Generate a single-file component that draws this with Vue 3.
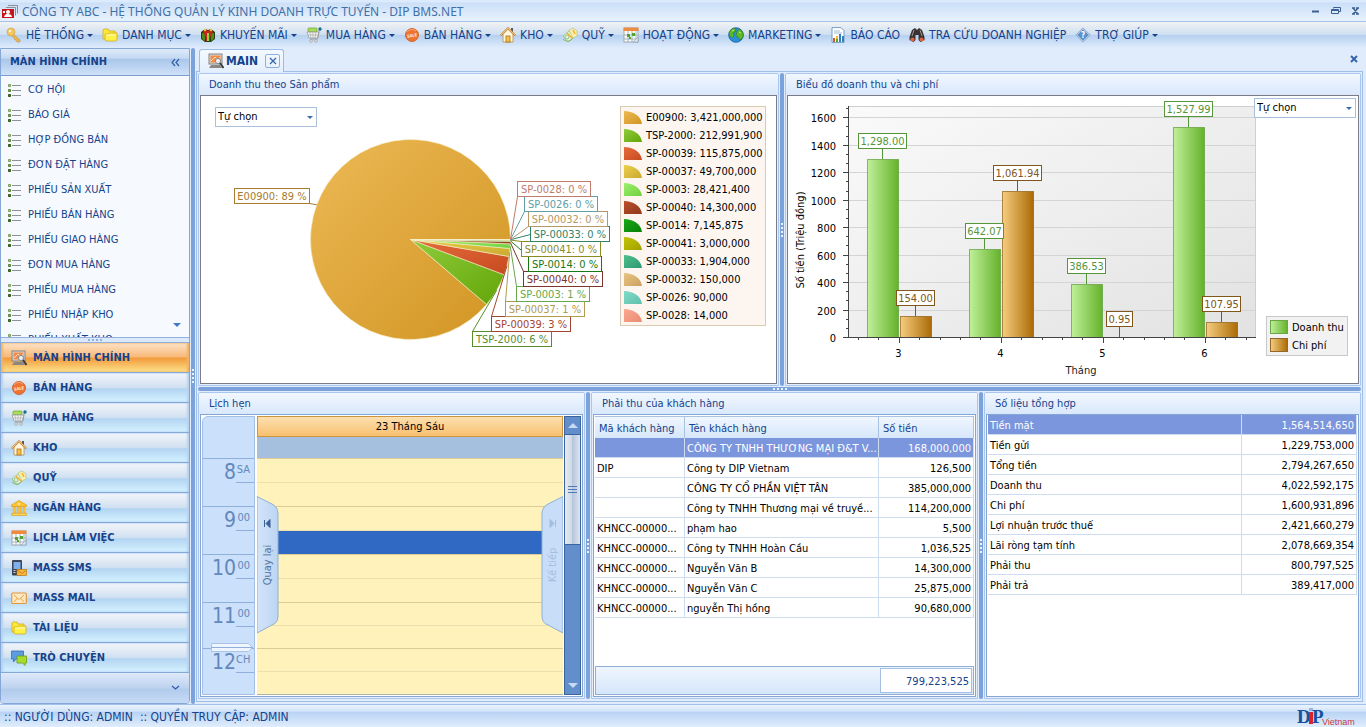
<template>
  <div class="app">
    <svg class="sprite" aria-hidden="true">
      <defs>
        <symbol id="i-app" viewBox="0 0 16 16">
          <path d="M6 1.500h9.500v8M4 3.500h9.500v8" fill="none" stroke="#8a8f98" stroke-width="1" />
          <rect x="0" y="5" width="12" height="9" fill="#c8141a" />
          <circle cx="6" cy="8" r="2" fill="#fff" />
          <path d="M2 13c1-3 2-3 4-3s4 1 4 3z" fill="#fff" />
          <path d="M1 7h2v2H1z" fill="#fff" />
        </symbol>
        <symbol id="i-key" viewBox="0 0 16 16">
          <path d="M6 6l8 7v2h-3l-1-2H9l-1-2-3-3z" fill="#e9b64c" stroke="#c99440" stroke-width=".6" />
          <circle cx="5" cy="5" r="4" fill="#f3c661" stroke="#d6a44c" stroke-width=".7" />
          <circle cx="4" cy="4" r="1.2" fill="#fdf4dc" />
        </symbol>
        <symbol id="i-folder" viewBox="0 0 16 16">
          <path d="M1 3l1-1h4l1 2h6v8H1z" fill="#ffe838" stroke="#d0ad1c" stroke-width=".8" />
          <path d="M3 7h3l1-1h8v7l-1 1H4l-1-1z" fill="#fff04a" stroke="#d0ad1c" stroke-width=".8" />
          <path d="M4 8h10" stroke="#fffbc0" />
        </symbol>
        <symbol id="i-gift" viewBox="0 0 16 16">
          <path d="M1 5l4-3 3 1 3-1 4 3v7l-4 3H5l-4-3z" fill="#273f12" />
          <path d="M2 6h3v8l-3-2zM11 6h3v6l-3 2z" fill="#4c8a1c" />
          <path d="M8 4C5 1 2 4 4 7s2 5 2 7h4c0-2 0-4 2-7s-1-6-4-3z" fill="#c3261b" />
          <path d="M7 6h2v8H7z" fill="#8ed33b" />
          <circle cx="5" cy="3" r="1.3" fill="#e6c33a" />
          <circle cx="11" cy="3" r="1.3" fill="#e6c33a" />
        </symbol>
        <symbol id="i-cart" viewBox="0 0 16 16">
          <rect x="2" y="1" width="9" height="4" rx="1" fill="#a8dc5a" stroke="#6fa32c" stroke-width=".7" />
          <path d="M1 5h12l-1.500 6H3z" fill="#f5f5f5" stroke="#9a9a9a" stroke-width=".8" />
          <path d="M4 5l1 6M7 5v6M10 5l-1 6M2 8h10" stroke="#a9a9a9" stroke-width=".7" />
          <path d="M12 11l1-7 1-2M4 12h8" fill="none" stroke="#9a9a9a" stroke-width=".9" />
          <circle cx="5" cy="14" r="1.300" fill="#fff" stroke="#999" stroke-width=".8" />
          <circle cx="10" cy="14" r="1.300" fill="#fff" stroke="#999" stroke-width=".8" />
          <circle cx="14" cy="2" r="1.700" fill="#176f8e" />
        </symbol>
        <symbol id="i-sale" viewBox="0 0 16 16">
          <circle cx="8" cy="8" r="6.500" fill="#ef7432" stroke="#c9561c" stroke-width=".8" />
          <path d="M3 5a6 6 0 0 1 9-1" fill="none" stroke="#f9a878" />
          <text x="8" y="10" text-anchor="middle" font-size="4" font-weight="700" fill="#ffe8d8" transform="rotate(-8 8 8)">SALE</text>
        </symbol>
        <symbol id="i-house" viewBox="0 0 16 16">
          <path d="M11 1h2v5h-2z" fill="#5a5a5a" />
          <path d="M3 7l5-5 5 5v8H3z" fill="#fff6e0" stroke="#b58a4a" stroke-width=".8" />
          <path d="M.7 8.500L8 1.300l7.300 7.200" fill="none" stroke="#c98a3a" stroke-width="2" />
          <path d="M1 8l7-6.700L15 8" fill="none" stroke="#f6d9a0" stroke-width=".8" />
          <rect x="6" y="9" width="4" height="6" fill="#f8c23c" stroke="#a8701c" stroke-width=".8" />
        </symbol>
        <symbol id="i-money" viewBox="0 0 16 16">
          <path d="M1 9l6-5 5 6-6 5z" fill="#e3f3dc" stroke="#8fc07c" stroke-width=".8" />
          <path d="M1 12c3 3 7 3 10-1" fill="none" stroke="#7fb56a" />
          <circle cx="5" cy="10" r="2" fill="none" stroke="#7fb56a" stroke-width=".8" />
          <path d="M7 3l4-2 4 3v5l-4 2z" fill="#fbf0b0" stroke="#b9c98a" stroke-width=".8" />
          <path d="M5 6l5 5M11 3l2 4" stroke="#f2b32c" stroke-width="1.600" />
        </symbol>
        <symbol id="i-calendar" viewBox="0 0 16 16">
          <rect x="1" y="1" width="14" height="14" fill="#fbfbf6" stroke="#8f9aa6" stroke-width=".8" />
          <path d="M.6.600h14.800v3.400H.6z" fill="#f08a3c" />
          <path d="M1 8h14M1 12h14M5 4v11M9 4v11M13 4v11" stroke="#8fa6b4" stroke-width=".8" />
          <path d="M4 7h3v3H4zM9 6h3v3H9zM6 10h2v2H6z" fill="#4fa52f" />
          <path d="M15 10v5h-5z" fill="#d8e8f4" stroke="#8f9aa6" stroke-width=".6" />
        </symbol>
        <symbol id="i-globe" viewBox="0 0 16 16">
          <circle cx="8" cy="8" r="7.300" fill="#2a8fdc" stroke="#175b98" stroke-width=".8" />
          <path d="M2 4c2-3 5-3 6-2l-1 3-2 1 1 3-2 2-2-2-1-3zM9 4l3-2 3 4v4l-3 3-2-3-2-1z" fill="#5dbb2b" stroke="#2f7d14" stroke-width=".6" />
          <path d="M4 4l2-1M11 5l2 1" stroke="#c7ef6a" />
        </symbol>
        <symbol id="i-report" viewBox="0 0 16 16">
          <path d="M2 .600h9l3 3v11.800H2z" fill="#fff" stroke="#6a93bd" stroke-width=".9" />
          <path d="M4 4h6M4 6h8" stroke="#9cbbd8" />
          <path d="M3 11h2v4H3z" fill="#e5502c" />
          <path d="M6 9h2v6H6z" fill="#f1b72d" />
          <path d="M9 7h2v8H9zM12 9h2v6h-2z" fill="#2f84bd" />
          <path d="M6 12h2v3H6z" fill="#54a836" />
        </symbol>
        <symbol id="i-binoculars" viewBox="0 0 16 16">
          <path d="M3 3l3-2 2 2 2-2 3 2 2.500 7v3l-4 2-2-2V8h-3v5l-2 2-4-2v-3z" fill="#3a3232" />
          <path d="M5 3l-2 6M11 3l2 6" stroke="#9a9494" />
          <circle cx="3.500" cy="12.500" r="2" fill="#e2603a" />
          <circle cx="12.500" cy="12.500" r="2" fill="#e2603a" />
        </symbol>
        <symbol id="i-help" viewBox="0 0 16 16">
          <path d="M8 .8L15.200 8 8 15.200.8 8z" fill="#f4f8fc" stroke="#86a9cf" />
          <path d="M8 2l6 6-6 6-6-6z" fill="#5f92cb" />
          <text x="8" y="11" text-anchor="middle" font-size="8" font-weight="700" fill="#fff">?</text>
        </symbol>
        <symbol id="i-monitor" viewBox="0 0 16 16">
          <rect x="1" y="1" width="13" height="10" fill="#d9d9d6" stroke="#85837f" />
          <rect x="2.500" y="2.500" width="10" height="7" fill="#f28c45" />
          <path d="M3 8l4-4 3 3 2-3" stroke="#fcdcc0" fill="none" />
          <path d="M3 12h9l2 3H1z" fill="#8b8884" />
          <circle cx="10" cy="8" r="2.600" fill="#e8eef2" stroke="#8b8b8b" />
          <path d="M12 10l3.500 5" stroke="#3b3b3b" stroke-width="2" />
        </symbol>
        <symbol id="i-bank" viewBox="0 0 16 16">
          <path d="M8 .5L15.500 5v1.500H.5V5z" fill="#ffc42e" stroke="#dd9a17" stroke-width=".7" />
          <path d="M2 7h2.500v6H2zM6 7h1.600v6H6zM8.800 7h1.600v6H8.800zM12 7h2v6h-2z" fill="#fdc63b" stroke="#e0a020" stroke-width=".4" />
          <path d="M.5 13.300h15v2.200H.5z" fill="#ffd24f" stroke="#dd9a17" stroke-width=".6" />
          <circle cx="8" cy="4" r="1" fill="#fff3c5" />
        </symbol>
        <symbol id="i-phone" viewBox="0 0 16 16">
          <rect x="1" y="0" width="10" height="15.500" rx="1" fill="#3b4656" />
          <rect x="2.500" y="2" width="7" height="7" fill="#7fb0ee" />
          <path d="M2.500 10.500h2M2.500 12.500h2" stroke="#c7d0dc" />
          <rect x="6" y="9.500" width="9.500" height="6" fill="#f7b73a" stroke="#c27a16" stroke-width=".7" />
          <path d="M6 10l5 3.500L15.500 10" fill="none" stroke="#c27a16" stroke-width=".8" />
        </symbol>
        <symbol id="i-mail" viewBox="0 0 16 16">
          <rect x=".7" y="3" width="14.600" height="10.500" rx="1" fill="#fde9c4" stroke="#e5983a" stroke-width="1.200" />
          <path d="M3 5l5 4.500L13 5M3 12l3.500-4M13 12L9.500 8" fill="none" stroke="#e9a546" />
        </symbol>
        <symbol id="i-chat" viewBox="0 0 16 16">
          <path d="M.5 1h12v8H5l-2.500 3V9h-2z" fill="#5b9bdf" stroke="#3a6fa8" stroke-width=".8" />
          <path d="M6 6h9.500v7H14v2.500L11.500 13H6z" fill="#a6dc2c" stroke="#6b9d14" stroke-width=".8" />
        </symbol>
        <symbol id="i-list" viewBox="0 0 14 14">
          <path d="M4 2.500h9M4 7.500h9M4 12.500h9" stroke="#8e9298" />
          <path d="M.5 1.500h2v2h-2z" fill="#a9c98a" stroke="#7fa05c" />
          <path d="M.5 6.500h2v2h-2z" fill="#86ab62" stroke="#5a8238" />
          <path d="M.5 11.500h2v2h-2z" fill="#4f7a2a" stroke="#2f5a12" />
        </symbol>
      </defs>
    </svg>

    <header class="title">
      <svg class="icon"><use href="#i-app" /></svg>
      <h1 class="title__text">CÔNG TY ABC - HỆ THỐNG QUẢN LÝ KINH DOANH TRỰC TUYẾN - DIP BMS.NET</h1>
      <button class="title__btn" aria-label="Minimize">
        <svg width="10" height="10"><path d="M1 5.500h7" stroke="#3c6090" stroke-width="2" /></svg>
      </button>
      <button class="title__btn" aria-label="Restore">
        <svg width="10" height="10"><path d="M2.500 2.500v-1h7v4h-2M.5 3.500h7v4h-7zM.5 4.500h7" fill="none" stroke="#3c6090" /></svg>
      </button>
      <button class="title__btn" aria-label="Close">
        <svg width="10" height="10"><path d="M2 2l5 6M7 2L2 8M1 2h3M5 2h3M1 8h3M5 8h3" stroke="#3c6090" stroke-width="1.300" /></svg>
      </button>
    </header>

    <nav class="menu">
      <button v-for="m in menu" :key="m.text" class="menu__item">
        <svg class="icon"><use :href="'#i-' + m.icon" /></svg>
        <span>{{ m.text }}</span>
        <i v-if="!m.plain" class="caret"></i>
      </button>
    </nav>

    <div class="body">
      <aside class="side">
        <div class="side__head">
          <span>MÀN HÌNH CHÍNH</span>
          <button class="side__collapse" aria-label="Collapse">
            <svg width="9" height="9"><path d="M4 1L1 4.500 4 8M8 1L5 4.500 8 8" fill="none" stroke="#2f5fa8" stroke-width="1.200" /></svg>
          </button>
        </div>
        <div class="side__list">
          <a v-for="l in links" :key="l" href="#" class="side__link">
            <svg class="side__bullet"><use href="#i-list" /></svg>{{ l }}
          </a>
          <i class="side__more"></i>
        </div>
        <div class="side__grip"></div>
        <button
          v-for="n in groups"
          :key="n.text"
          class="side__nav"
          :class="{ 'side__nav--active': n.active }"
        >
          <svg class="icon"><use :href="'#i-' + n.icon" /></svg>{{ n.text }}
        </button>
        <div class="side__foot">
          <button class="side__collapse" aria-label="More">
            <svg width="9" height="6"><path d="M1 1l3.500 3L8 1" fill="none" stroke="#2f5fa8" stroke-width="1.300" /></svg>
          </button>
        </div>
      </aside>

      <div class="split split--v"></div>

      <main class="main">
        <div class="tabs">
          <div class="tab">
            <svg class="icon"><use href="#i-monitor" /></svg>
            <span>MAIN</span>
            <button class="tab__close" aria-label="Close tab">
              <svg width="8" height="8"><path d="M1 1l6 6M7 1L1 7" stroke="#3565ad" stroke-width="1.300" /></svg>
            </button>
          </div>
          <button class="tabs__close" aria-label="Close">
            <svg width="8" height="8"><path d="M1 1l6 6M7 1L1 7" stroke="#3565ad" stroke-width="2" /></svg>
          </button>
        </div>

        <div class="page">
          <div class="row row--top">
            <section class="panel">
              <h2 class="panel__head">Doanh thu theo Sản phẩm</h2>
              <div class="panel__content panel__content--chart">
                <svg class="chart" viewBox="0 0 575 287" role="img" aria-label="Doanh thu theo Sản phẩm">
                  <defs>
                    <linearGradient v-for="p in slices" :id="'g-' + p.code" :key="p.code" x1="0" y1="0" x2="1" y2="1">
                      <stop offset="0" :stop-color="p.from" />
                      <stop offset="1" :stop-color="p.to" />
                    </linearGradient>
                  </defs>
                  <path v-for="p in slices" :key="p.code" :d="p.path" :fill="`url(#g-${p.code})`" stroke="#f6efc8" stroke-width=".6" />
                  <g v-for="p in slices" :key="p.code">
                    <path :d="p.leader" fill="none" :stroke="p.line" />
                    <rect :x="p.lx + 0.5" :y="p.ly + 0.5" :width="p.lw" height="15" fill="#fff" :stroke="p.line" />
                    <text :x="p.lx + 0.5 + p.lw / 2" :y="p.ly + 12" text-anchor="middle" :fill="p.line">{{ p.code }}: {{ p.pct }} %</text>
                  </g>
                  <rect x="419.500" y="10.500" width="145" height="219" fill="#fdf6f0" stroke="#d9cbb0" />
                  <g v-for="(p, i) in slices" :key="p.code">
                    <path :d="`M423 ${15 + i * 18}c9 0 17 5 18 13h-18z`" :fill="`url(#g-${p.code})`" />
                    <text x="445" :y="25 + i * 18" fill="#000">{{ p.code }}: {{ fmt(p.value) }}</text>
                  </g>
                </svg>
                <label class="pick pick--left">
                  <select aria-label="Kiểu biểu đồ"><option>Tự chọn</option></select>
                </label>
              </div>
            </section>
            <div class="split split--v"></div>
            <section class="panel">
              <h2 class="panel__head">Biểu đồ doanh thu và chi phí</h2>
              <div class="panel__content panel__content--chart">
                <svg class="chart" viewBox="0 0 570 287" role="img" aria-label="Biểu đồ doanh thu và chi phí">
                  <defs>
                    <linearGradient id="plot" x1="0" y1="0" x2="1" y2="1">
                      <stop offset="0" stop-color="#fafafa" />
                      <stop offset="1" stop-color="#e2e2e2" />
                    </linearGradient>
                    <linearGradient id="green">
                      <stop offset="0" stop-color="#c0f09a" />
                      <stop offset="1" stop-color="#65b22a" />
                    </linearGradient>
                    <linearGradient id="brown">
                      <stop offset="0" stop-color="#f5cd7e" />
                      <stop offset="1" stop-color="#ab6a06" />
                    </linearGradient>
                  </defs>
                  <rect x="60.500" y="10.500" width="407" height="231" fill="url(#plot)" stroke="#cfcfcf" />
                  <g v-for="t in yTicks" :key="t.v">
                    <path v-if="t.major" :d="`M61 ${t.y}H467`" stroke="#d4d4d4" />
                    <path :d="`M${t.major ? 55 : 58} ${t.y}h${t.major ? 6 : 3}`" stroke="#444" />
                    <text v-if="t.major" x="48" :y="t.y + 4" text-anchor="end" fill="#000">{{ t.v }}</text>
                  </g>
                  <path v-for="n in 20" :key="n" :d="`M${Math.round(70 + (n - 1) * 20.4) + 0.5} 241v${n % 5 === 3 ? 6 : 3}`" stroke="#444" />
                  <rect
                    v-for="(b, i) in bars"
                    :key="i"
                    :x="b.x + 0.5"
                    :y="b.top + 0.5"
                    :width="b.w"
                    :height="241 - b.top"
                    :fill="`url(#${b.kind})`"
                    :stroke="b.kind === 'green' ? '#5d9c3a' : '#8d5c12'"
                    stroke-opacity=".7"
                  />
                  <path d="M60.500 10v232M60 241.500h408" stroke="#444" />
                  <g v-for="(b, i) in bars" :key="'l' + i" :stroke="b.color">
                    <path :d="`M${b.cx + 0.5} ${b.top}v-10`" />
                    <rect :x="b.cx - b.lw / 2 + 0.5" :y="b.top - 25.5" :width="b.lw" height="15" fill="#fff" />
                    <text :x="b.cx + 0.5" :y="b.top - 14" text-anchor="middle" :fill="b.color" stroke="none">{{ b.label }}</text>
                  </g>
                  <text v-for="(m, i) in [3, 4, 5, 6]" :key="m" :x="110.5 + i * 102" y="261" text-anchor="middle" fill="#000">{{ m }}</text>
                  <text x="293" y="278" text-anchor="middle" fill="#222">Tháng</text>
                  <text transform="translate(16 144) rotate(-90)" text-anchor="middle" fill="#000">Số tiền (Triệu đồng)</text>
                  <rect x="478.500" y="220.500" width="81" height="39" fill="#f2f2f2" stroke="#c8c8c8" />
                  <rect x="482.500" y="224.500" width="17" height="13" fill="url(#green)" stroke="#6aa548" />
                  <rect x="482.500" y="242.500" width="17" height="13" fill="url(#brown)" stroke="#94672a" />
                  <text x="504" y="235" fill="#000">Doanh thu</text>
                  <text x="504" y="253" fill="#000">Chi phí</text>
                </svg>
                <label class="pick pick--right">
                  <select aria-label="Kiểu biểu đồ"><option>Tự chọn</option></select>
                </label>
              </div>
            </section>
          </div>

          <div class="split split--h"></div>

          <div class="row row--bottom">
            <section class="panel">
              <h2 class="panel__head">Lịch hẹn</h2>
              <div class="panel__content cal">
                <div class="ruler">
                  <div class="ruler__top"></div>
                  <div class="hours">
                    <div v-for="h in hours" :key="h.h" class="ruler__hour">
                      <svg v-if="h.now" class="ruler__now" width="43" height="9">
                        <path d="M.5.500h37l4 4-4 4H.5z" fill="#eef5fe" stroke="#a9c4e6" />
                        <path d="M0 4.500h42" stroke="#8fb0da" />
                      </svg>
                      <span class="ruler__num">{{ h.h }}</span>
                      <span class="ruler__sup">{{ h.sup }}</span>
                    </div>
                  </div>
                </div>
                <div class="day">
                  <div class="day__head">23 Tháng Sáu</div>
                  <div class="day__all"></div>
                  <div class="hours">
                    <div v-for="h in hours" :key="h.h" class="day__hour">
                      <div class="day__half"></div>
                      <div class="day__half" :class="{ 'day__half--sel': h.h === 9 }"></div>
                    </div>
                  </div>
                  <button class="day__nav day__nav--prev">
                    <svg width="22" height="138">
                      <defs>
                        <linearGradient id="nav"><stop offset="0" stop-color="#d3e4f9" /><stop offset="1" stop-color="#bcd5f3" /></linearGradient>
                      </defs>
                      <path d="M0 .5L15 8q6 3 6 10v102q0 7-6 9L0 137z" fill="url(#nav)" stroke="#8fafd6" />
                      <path d="M7.500 24v7M13 23.500v8L9 27.500z" fill="#3d5f94" stroke="#3d5f94" />
                      <text transform="translate(14 69) rotate(-90)" text-anchor="middle" fill="#5474a3">Quay lại</text>
                    </svg>
                  </button>
                  <button class="day__nav day__nav--next" disabled>
                    <svg width="22" height="138">
                      <path d="M22 .5L7 8q-6 3-6 10v102q0 7 6 9l15 8z" fill="#c8ddf7" stroke="#8fafd6" />
                      <path d="M14.500 24v7M9 23.500v8l4-4z" fill="#a3bddd" stroke="#a3bddd" />
                      <text transform="translate(15 69) rotate(-90)" text-anchor="middle" fill="#a3bddd">Kế tiếp</text>
                    </svg>
                  </button>
                </div>
                <div class="bar">
                  <button class="bar__btn" aria-label="Up"><i class="bar__up"></i></button>
                  <div class="bar__thumb"></div>
                  <div class="bar__track"></div>
                  <button class="bar__btn" aria-label="Down"><i class="bar__down"></i></button>
                </div>
              </div>
            </section>
            <div class="split split--v"></div>
            <section class="panel">
              <h2 class="panel__head">Phải thu của khách hàng</h2>
              <div class="panel__content debts">
                <table class="grid">
                  <colgroup><col class="grid__code" /><col /><col class="grid__money" /></colgroup>
                  <thead>
                    <tr><th>Mã khách hàng</th><th>Tên khách hàng</th><th>Số tiền</th></tr>
                  </thead>
                  <tbody>
                    <tr v-for="(d, i) in debts" :key="i" :class="{ sel: i === 0 }">
                      <td>{{ d[0] }}</td>
                      <td>{{ d[1] }}</td>
                      <td class="num">{{ fmt(d[2]) }}</td>
                    </tr>
                  </tbody>
                </table>
                <div class="debts__foot"><output class="debts__total">{{ fmt(debtTotal) }}</output></div>
              </div>
            </section>
            <div class="split split--v"></div>
            <section class="panel">
              <h2 class="panel__head">Số liệu tổng hợp</h2>
              <div class="panel__content summary">
                <table class="grid">
                  <colgroup><col /><col class="grid__sum" /></colgroup>
                  <tbody>
                    <tr v-for="(s, i) in summary" :key="s[0]" :class="{ sel: i === 0 }">
                      <td>{{ s[0] }}</td>
                      <td class="num">{{ fmt(s[1]) }}</td>
                    </tr>
                  </tbody>
                </table>
              </div>
            </section>
          </div>
        </div>
      </main>
    </div>

    <footer class="status">
      <span>:: NGƯỜI DÙNG: ADMIN</span>
      <span>:: QUYỀN TRUY CẬP: ADMIN</span>
      <svg class="status__logo" width="60" height="20">
        <text x="0" y="16" class="logo-big" fill="#17509f">D</text>
        <path d="M12 1h4v3h-4z" fill="#8fb6e6" />
        <path d="M12 5h4v12h-4z" fill="#d9232b" />
        <text x="15" y="16" class="logo-big" fill="#17509f">P</text>
        <text x="25" y="18" class="logo-small" fill="#c53a42">Vietnam</text>
      </svg>
    </footer>
  </div>
</template>

<script setup>
const menu = [
  { icon: 'key', text: 'HỆ THỐNG' },
  { icon: 'folder', text: 'DANH MỤC' },
  { icon: 'gift', text: 'KHUYẾN MÃI' },
  { icon: 'cart', text: 'MUA HÀNG' },
  { icon: 'sale', text: 'BÁN HÀNG' },
  { icon: 'house', text: 'KHO' },
  { icon: 'money', text: 'QUỸ' },
  { icon: 'calendar', text: 'HOẠT ĐỘNG' },
  { icon: 'globe', text: 'MARKETING' },
  { icon: 'report', text: 'BÁO CÁO', plain: true },
  { icon: 'binoculars', text: 'TRA CỨU DOANH NGHIỆP', plain: true },
  { icon: 'help', text: 'TRỢ GIÚP' },
]

const links = [
  'CƠ HỘI', 'BÁO GIÁ', 'HỢP ĐỒNG BÁN', 'ĐƠN ĐẶT HÀNG', 'PHIẾU SẢN XUẤT', 'PHIẾU BÁN HÀNG',
  'PHIẾU GIAO HÀNG', 'ĐƠN MUA HÀNG', 'PHIẾU MUA HÀNG', 'PHIẾU NHẬP KHO', 'PHIẾU XUẤT KHO',
]

const groups = [
  { icon: 'monitor', text: 'MÀN HÌNH CHÍNH', active: true },
  { icon: 'sale', text: 'BÁN HÀNG' },
  { icon: 'cart', text: 'MUA HÀNG' },
  { icon: 'house', text: 'KHO' },
  { icon: 'money', text: 'QUỸ' },
  { icon: 'bank', text: 'NGÂN HÀNG' },
  { icon: 'calendar', text: 'LỊCH LÀM VIỆC' },
  { icon: 'phone', text: 'MASS SMS' },
  { icon: 'mail', text: 'MASS MAIL' },
  { icon: 'folder', text: 'TÀI LIỆU' },
  { icon: 'chat', text: 'TRÒ CHUYỆN' },
]

// lx, ly, lw: label box; ax, ay: where the leader leaves the box
const products = [
  { code: 'E00900', value: 3421000000, from: '#edb955', to: '#d09422', line: '#a67c30', lx: 33, ly: 92, lw: 75, ax: 75, ay: 15 },
  { code: 'TSP-2000', value: 212991900, from: '#8fcc3c', to: '#62a508', line: '#5a8c2c', lx: 271, ly: 235, lw: 79, ay: 0 },
  { code: 'SP-00039', value: 115875000, from: '#e66c3c', to: '#c74a20', line: '#a34430', lx: 290, ly: 220, lw: 79, ay: 0 },
  { code: 'SP-00037', value: 49700000, from: '#eccf4c', to: '#c9aa30', line: '#b09c4c', lx: 304, ly: 205, lw: 79, ay: 0 },
  { code: 'SP-0003', value: 28421400, from: '#9cf06c', to: '#70d040', line: '#68a84c', lx: 315, ly: 190, lw: 73, ay: 0 },
  { code: 'SP-00040', value: 14300000, from: '#bc4e2c', to: '#8e3a1c', line: '#7c342c', lx: 322, ly: 175, lw: 79, ay: 0 },
  { code: 'SP-0014', value: 7145875, from: '#18a818', to: '#088008', line: '#187818', lx: 327, ly: 160, lw: 73, ay: 0 },
  { code: 'SP-00041', value: 3000000, from: '#c4c404', to: '#a0a000', line: '#8c8c24', lx: 320, ly: 145, lw: 79, ay: 0 },
  { code: 'SP-00033', value: 1904000, from: '#4cc08c', to: '#309870', line: '#308468', lx: 329, ly: 130, lw: 79, ay: 8 },
  { code: 'SP-00032', value: 150000, from: '#e8c484', to: '#cca060', line: '#b49868', lx: 327, ly: 115, lw: 79, ay: 15 },
  { code: 'SP-0026', value: 90000, from: '#80dcc8', to: '#60c0ac', line: '#60a0a8', lx: 323, ly: 100, lw: 73, ay: 15 },
  { code: 'SP-0028', value: 14000, from: '#fca890', to: '#e88c74', line: '#c07c6c', lx: 316, ly: 85, lw: 73, ay: 15 },
]

const CX = 209.5
const CY = 143.5
const R = 100
const total = products.reduce((s, p) => s + p.value, 0)

function point(a, r = R) {
  return `${(CX + r * Math.cos(a)).toFixed(2)} ${(CY + r * Math.sin(a)).toFixed(2)}`
}

// slices run clockwise from east, smallest first
let angle = 0
const slices = [...products]
  .reverse()
  .map((p) => {
    const a0 = angle
    angle += (p.value / total) * Math.PI * 2
    const big = angle - a0 > Math.PI ? 1 : 0
    const mid = p.code === 'E00900' ? Math.PI * 1.113 : (a0 + angle) / 2
    return {
      ...p,
      pct: Math.round((p.value / total) * 100),
      path: `M${CX} ${CY}L${point(a0)}A${R} ${R} 0 ${big} 1 ${point(angle)}z`,
      leader: `M${point(mid)}L${p.lx + (p.ax || 0) + 0.5} ${p.ly + p.ay + 0.5}`,
    }
  })
  .reverse()

const yTicks = Array.from({ length: 26 }, (_, i) => {
  const v = (i * 200) / 3
  return { v: Math.round(v), y: Math.round(241 - v * 0.1373) + 0.5, major: i % 3 === 0 }
}).filter((t) => t.y > 10)

const bars = [
  [1298, 154],
  [642.07, 1061.94],
  [386.53, 0.95],
  [1527.99, 107.95],
].flatMap((pair, i) =>
  pair.map((v, k) => {
    const label = v.toLocaleString('en-US', { minimumFractionDigits: 2 })
    const x = 79 + i * 102 + k * 33
    return {
      x,
      w: 31,
      cx: x + 15,
      top: Math.round(241 - v * 0.1373),
      kind: k ? 'brown' : 'green',
      color: k ? '#80561a' : '#56963a',
      label,
      lw: { 4: 26, 6: 38, 8: 48 }[label.length],
    }
  }),
)

const hours = [
  { h: 8, sup: 'SA' },
  { h: 9, sup: '00' },
  { h: 10, sup: '00' },
  { h: 11, sup: '00' },
  { h: 12, sup: 'CH', now: true },
]

const debts = [
  ['', 'CÔNG TY TNHH THƯƠNG MẠI Đ&T V...', 168000000],
  ['DIP', 'Công ty DIP Vietnam', 126500],
  ['', 'CÔNG TY CỔ PHẦN VIỆT TÂN', 385000000],
  ['', 'Công ty TNHH Thương mại về truyề...', 114200000],
  ['KHNCC-00000...', 'phạm hao', 5500],
  ['KHNCC-00000...', 'Công ty TNHH Hoàn Cầu', 1036525],
  ['KHNCC-00000...', 'Nguyễn Văn B', 14300000],
  ['KHNCC-00000...', 'Nguyễn Văn C', 25875000],
  ['KHNCC-00000...', 'nguyễn Thị hồng', 90680000],
]
const debtTotal = 799223525

const summary = [
  ['Tiền mặt', 1564514650],
  ['Tiền gửi', 1229753000],
  ['Tổng tiền', 2794267650],
  ['Doanh thu', 4022592175],
  ['Chi phí', 1600931896],
  ['Lợi nhuận trước thuế', 2421660279],
  ['Lãi ròng tạm tính', 2078669354],
  ['Phải thu', 800797525],
  ['Phải trả', 389417000],
]

function fmt(n) {
  return n.toLocaleString('en-US')
}
</script>

<style>
body {
  margin: 0;
}
</style>

<style scoped>
.app {
  display: flex;
  flex-direction: column;
  height: 100vh;
  min-height: 640px;
  overflow: hidden;
  background: #e0ecfc;
  color: #15428b;
  font: 11px/14px 'DejaVu Sans Condensed', 'Noto Sans', sans-serif;
}

.app *,
.app *::before,
.app *::after {
  box-sizing: border-box;
}

button {
  padding: 0;
  border: 0;
  background: none;
  color: inherit;
  font: inherit;
}

h1,
h2 {
  margin: 0;
  font: inherit;
}

.sprite {
  position: absolute;
  width: 0;
  height: 0;
}

.icon {
  width: 16px;
  height: 16px;
  flex-shrink: 0;
}

.caret {
  border: 3px solid transparent;
  border-top-color: #15428b;
  border-bottom: 0;
}

/* ── Title and menu ── */
.title {
  display: flex;
  align-items: center;
  height: 22px;
  padding: 2px 0 0 2px;
  border-bottom: 1px solid #a3c2ea;
  background: linear-gradient(#dceafd 0 2px, #cbdff7 3px, #e8f2fd);
  color: #4270a8;
  font-family: 'Noto Sans', sans-serif;
  font-size: 12px;
}

.title__text {
  flex: 1;
  margin-left: 4px;
}

.title__btn {
  width: 20px;
  height: 20px;
}

.menu {
  display: flex;
  align-items: center;
  gap: 9px;
  height: 26px;
  padding-left: 6px;
  background: linear-gradient(#f2f2f2, #cfdff2 48%, #b4cfef 50%, #dfecfc);
  font-size: 12px;
  white-space: nowrap;
}

.menu__item {
  display: flex;
  align-items: center;
  gap: 4px;
}

.menu__item .caret {
  margin-left: -1px;
}

/* ── Body ── */
.body {
  display: flex;
  flex: 1;
  min-height: 0;
  padding-right: 3px;
}

.split {
  position: relative;
  flex: none;
  background: #7ba2da;
  border-radius: 2px;
}

.split--v {
  width: 4px;
  margin: 0 1px;
}

.split--h {
  height: 4px;
  margin: 1px 0;
}

.split::after {
  content: '';
  position: absolute;
  top: 50%;
  left: 50%;
  width: 2px;
  height: 14px;
  margin: -7px 0 0 -1px;
  background: repeating-linear-gradient(#eaf3ff 0 2px, transparent 2px 4px);
}

.split--h::after {
  width: 14px;
  height: 2px;
  margin: -1px 0 0 -7px;
  background: repeating-linear-gradient(90deg, #eaf3ff 0 2px, transparent 2px 4px);
}

/* ── Sidebar ── */
.side {
  display: flex;
  flex: none;
  flex-direction: column;
  width: 190px;
  border: 1px solid #84a7d6;
  border-radius: 0 0 4px 4px;
  overflow: hidden;
}

.side__head {
  display: flex;
  flex: none;
  align-items: center;
  justify-content: space-between;
  height: 27px;
  padding: 0 9px;
  border-bottom: 1px solid #7c9cd0;
  background: linear-gradient(#dfeafa 0, #c4d9f3 36%, #a9c6ea 38%, #cfe1f8);
  font-weight: 700;
}

.side__collapse {
  display: flex;
}

.side__list {
  position: relative;
  flex: 1;
  min-height: 0;
  overflow: hidden;
  background: #f6faff;
}

.side__link {
  display: flex;
  align-items: center;
  height: 25px;
  padding: 2px 0 0 7px;
  color: #15428b;
  text-decoration: none;
}

.side__bullet {
  width: 14px;
  height: 14px;
  margin-right: 6px;
}

.side__more {
  position: absolute;
  right: 8px;
  bottom: 10px;
  border: 4px solid transparent;
  border-top-color: #3f78c4;
  border-bottom: 0;
}

.side__grip {
  flex: none;
  height: 6px;
  border: solid #8fb1dc;
  border-width: 1px 0;
  background: repeating-linear-gradient(90deg, #8fb1dc 0 2px, transparent 2px 4px) center / 14px 2px no-repeat #dce9fa;
}

.side__nav {
  display: flex;
  flex: none;
  align-items: center;
  gap: 6px;
  height: 30px;
  padding-left: 10px;
  border-bottom: 1px solid #84a9d9;
  background: linear-gradient(#f3f6fa, #cfdff0 52%, #b3d4f2 54%, #d4f2ff);
  box-shadow: inset 2px 0 2px #b6d2f2, inset -2px 0 2px #b6d2f2;
  font-weight: 700;
}

.side__nav--active {
  background: linear-gradient(#fce4c8, #f8b878 48%, #f29a3c 52%, #fde28a);
  box-shadow: inset 2px 0 2px #f0b468, inset -2px 0 2px #f0b468;
}

.side__foot {
  display: flex;
  flex: none;
  align-items: center;
  justify-content: flex-end;
  height: 30px;
  padding-right: 9px;
  background: linear-gradient(#dfe9f8, #bdd2f0 50%, #b2cbed 54%, #c6daf5);
}

/* ── Tabs and page ── */
.main {
  display: flex;
  flex: 1;
  flex-direction: column;
  min-width: 0;
  padding-bottom: 2px;
}

.tabs {
  display: flex;
  justify-content: space-between;
  height: 23px;
  padding: 1px 5px 0 3px;
}

.tab {
  display: flex;
  align-items: center;
  height: 23px;
  padding: 0 3px 0 8px;
  border: 1px solid #9bbce6;
  border-bottom: 0;
  border-radius: 3px 3px 0 0;
  background: linear-gradient(#f4f9ff, #e4effd);
  font-size: 12px;
  font-weight: 700;
  z-index: 1;
}

.tab span {
  margin: 0 7px 0 2px;
}

.tab__close {
  display: flex;
  align-items: center;
  justify-content: center;
  width: 15px;
  height: 14px;
  border: 1px solid #8fb0df;
  border-radius: 2px;
}

.page {
  display: flex;
  flex: 1;
  flex-direction: column;
  min-height: 0;
  padding: 1px 1px 2px 1px;
  border: 1px solid #9fbfe8;
}

.row {
  display: grid;
  min-height: 0;
}

.row--top {
  flex: 313 1 0;
  grid-template-columns: minmax(0, 581fr) auto minmax(0, 576fr);
}

.row--bottom {
  flex: 307 1 0;
  grid-template-columns: minmax(0, 387fr) auto minmax(0, 387fr) auto minmax(0, 377fr);
}

.panel {
  display: flex;
  flex-direction: column;
  min-height: 0;
  padding-bottom: 1px;
  border: 1px solid #a9c7ee;
  border-radius: 2px 2px 0 0;
  background: #e6f0fd;
}

.panel__head {
  flex: none;
  height: 21px;
  padding: 4px 10px 3px;
  background: linear-gradient(#f1f7ff, #d9e8fb);
}

.panel__content {
  position: relative;
  flex: 1;
  min-height: 0;
  margin: 0 1px;
  border: 1px solid #85a6d4;
  background: #fff;
  color: #000;
}

.panel__content--chart {
  border-color: #7c7c86;
}

.chart {
  position: absolute;
  inset: 0;
  width: 100%;
  height: 100%;
}

.pick {
  position: absolute;
  width: 102px;
  height: 20px;
}

.pick--left {
  top: 11px;
  left: 14px;
}

.pick--right {
  top: 2px;
  right: 2px;
}

.pick select {
  width: 100%;
  height: 100%;
  padding: 0 2px;
  appearance: none;
  border: 1px solid #a9bfde;
  border-radius: 0;
  background: #fff;
  color: #000;
  font: inherit;
}

.pick::after {
  content: '';
  position: absolute;
  top: 9px;
  right: 4px;
  border: 3px solid transparent;
  border-top-color: #3c6cab;
  border-bottom: 0;
}

/* ── Calendar ── */
.cal {
  display: flex;
  padding: 1px;
}

.hours {
  display: grid;
  flex: 1;
  grid-template-rows: repeat(3, 48fr) repeat(2, 46fr);
  min-height: 0;
}

.ruler {
  display: flex;
  flex-direction: column;
  width: 53px;
  margin-right: 2px;
  border: 1px solid #a3bfe3;
  border-radius: 6px 0 0 0;
  background: #cbe0fa;
  color: #6388bb;
}

.ruler__top {
  flex: none;
  height: 41px;
}

.ruler__hour {
  position: relative;
  display: grid;
  grid-template-columns: 1fr 18px;
  min-height: 0;
  border-top: 1px solid #8fb0da;
}

.ruler__num {
  z-index: 1;
  font-size: 21px;
  line-height: 27px;
  text-align: right;
}

.ruler__sup {
  height: 24px;
  padding: 4px 4px 0 0;
  border-bottom: 1px solid #8fb0da;
  text-align: right;
}

.ruler__now {
  position: absolute;
  top: -6px;
  left: 8px;
}

.day {
  position: relative;
  display: flex;
  flex: 1;
  flex-direction: column;
  min-width: 0;
  border-bottom: 1px solid #a9b7a8;
}

.day__head {
  flex: none;
  height: 21px;
  border: 1px solid #cf9440;
  background: linear-gradient(#fce0b0, #f8c06e);
  line-height: 20px;
  text-align: center;
}

.day__all {
  flex: none;
  height: 21px;
  background: #a5bfdf;
}

.day__hour {
  display: grid;
  grid-template-rows: 1fr 1fr;
  border-top: 1px solid #dccb98;
  background: #fff2bb;
}

.day__half:first-child {
  border-bottom: 1px solid #eee0ae;
}

.day__half--sel {
  background: #3069c3;
}

.day__nav {
  position: absolute;
  top: 80px;
  height: 138px;
}

.day__nav--prev {
  left: 0;
}

.day__nav--next {
  right: 0;
}

.bar {
  display: flex;
  flex-direction: column;
  width: 17px;
  margin-left: 1px;
  border: 1px solid #3b649f;
  background: #628fcc;
}

.bar__btn {
  display: flex;
  flex: none;
  align-items: center;
  justify-content: center;
  height: 17px;
}

.bar__thumb {
  flex: 110 1 0;
  border: solid #3b649f;
  border-width: 1px 0;
  background:
    repeating-linear-gradient(#4f7ab8 0 1px, transparent 1px 3px) center / 9px 8px no-repeat,
    linear-gradient(90deg, #e6ebf2, #cfd9e6 45%, #b5c5da 50%, #dde5ee);
}

.bar__track {
  flex: 133 1 0;
}

.bar__up,
.bar__down {
  border: 5px solid transparent;
}

.bar__up {
  border-bottom-color: #c7dbf4;
  border-top: 0;
}

.bar__down {
  border-top-color: #c7dbf4;
  border-bottom: 0;
}

/* ── Tables ── */
.debts {
  display: flex;
  flex-direction: column;
  justify-content: space-between;
  padding: 1px;
}

.summary {
  padding: 0 1px;
}

.grid {
  width: 100%;
  border-collapse: separate;
  border-spacing: 0;
  table-layout: fixed;
}

.grid__code {
  width: 90px;
}

.grid__money {
  width: 95px;
}

.grid__sum {
  width: 115px;
}

.grid th {
  height: 22px;
  padding: 2px 4px 0;
  border: solid #a9c2e4;
  border-width: 1px 1px 0 0;
  background: linear-gradient(#f0f7ff, #d6e6fa);
  color: #15428b;
  font-weight: 400;
  text-align: left;
}

.grid td {
  height: 20px;
  padding: 2px 0 0 2px;
  border: solid #cddcee;
  border-width: 0 1px 1px 0;
  white-space: nowrap;
}

.grid .num {
  padding-right: 2px;
  text-align: right;
}

.grid .sel td {
  background: #7b96dd;
  color: #fff;
}

.debts__foot {
  display: flex;
  justify-content: flex-end;
  padding: 1px;
  border: 1px solid #8fadd5;
  background: linear-gradient(#eef6ff, #d6e6fa);
}

.debts__total {
  width: 92px;
  height: 25px;
  padding: 6px 2px 4px;
  border: 1px solid #a3bfe2;
  background: #fff;
  color: #15428b;
  text-align: right;
}

/* ── Status ── */
.status {
  display: flex;
  flex: none;
  align-items: center;
  gap: 7px;
  height: 23px;
  padding: 2px 9px 0 4px;
  border-top: 1px solid #a3c2ea;
  background: linear-gradient(#eaf3fe, #d2e4f9 28%, #b9d3f4 32%, #e0edfc);
  font-size: 12px;
}

.status__logo {
  margin-left: auto;
}

.logo-big {
  font: 700 19px 'Liberation Serif', serif;
}

.logo-small {
  font: 9px 'Liberation Sans', sans-serif;
}
</style>
